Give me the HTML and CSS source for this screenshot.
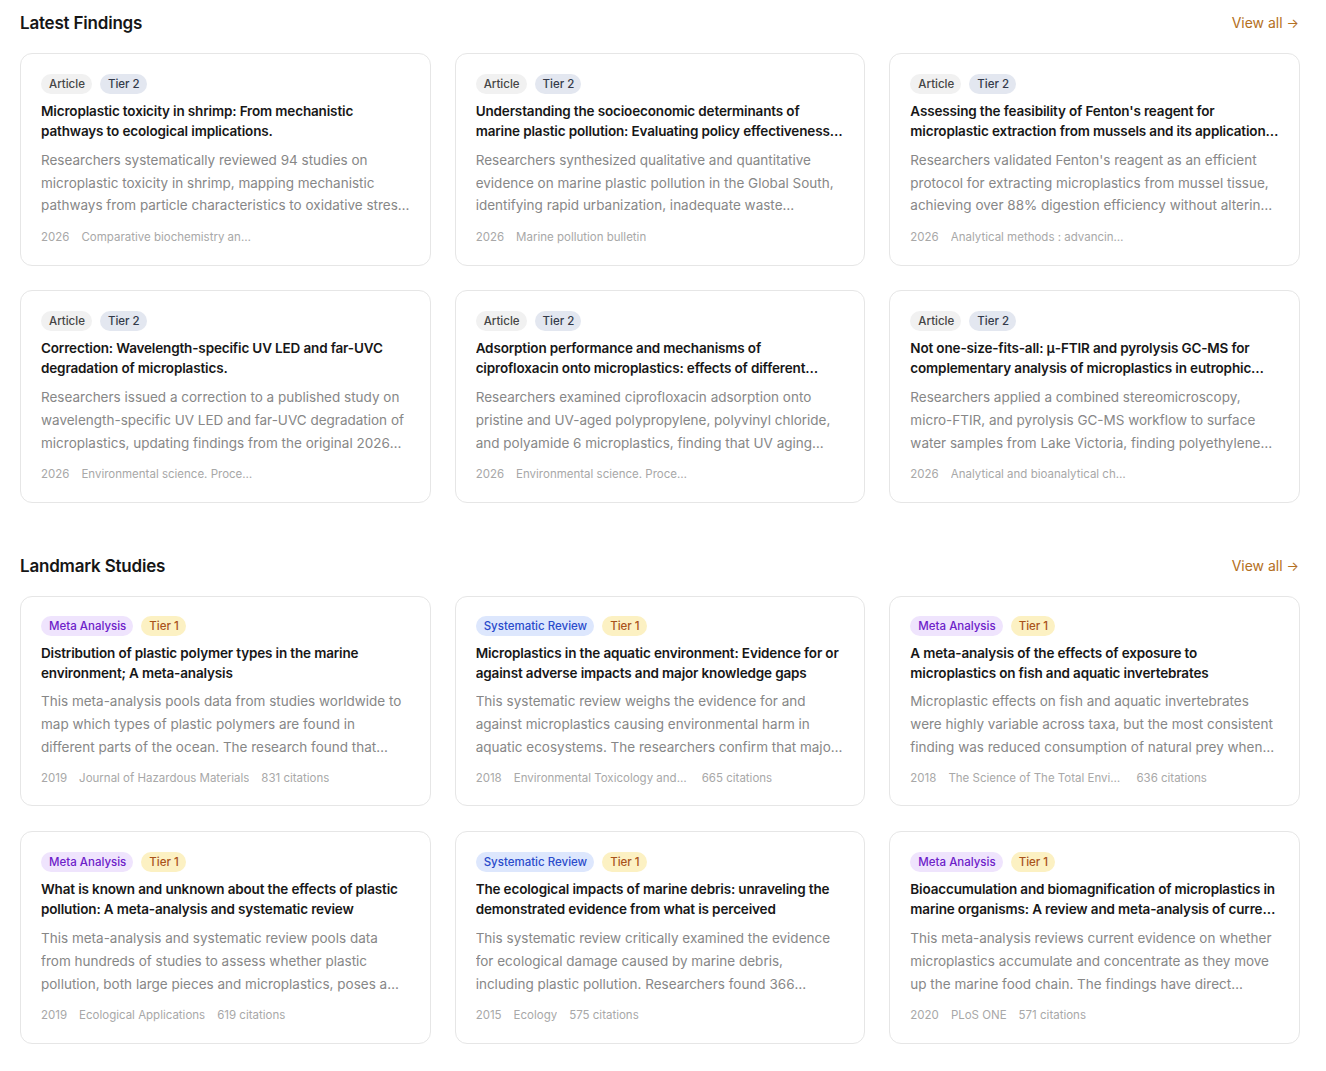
FILE: index.html
```html
<!DOCTYPE html>
<html lang="en">
<head>
<meta charset="utf-8">
<title>Findings</title>
<link rel="stylesheet" href="styles.css">
</head>
<body>
<main class="page">
  <section class="section">
    <div class="section-head">
      <h2 class="section-title">Latest Findings</h2>
      <a class="view-all" href="#">View all <span class="arrow">→</span></a>
    </div>
    <div class="grid">
      <article class="card">
        <div class="badges"><span class="badge badge-article">Article</span><span class="badge badge-tier2">Tier 2</span></div>
        <h3 class="card-title">Microplastic toxicity in shrimp: From mechanistic pathways to ecological implications.</h3>
        <p class="card-desc">Researchers systematically reviewed 94 studies on microplastic toxicity in shrimp, mapping mechanistic pathways from particle characteristics to oxidative stress and ecological implications.</p>
        <div class="meta"><span>2026</span><span class="journal">Comparative biochemistry and physiology</span></div>
      </article>
      <article class="card">
        <div class="badges"><span class="badge badge-article">Article</span><span class="badge badge-tier2">Tier 2</span></div>
        <h3 class="card-title">Understanding the socioeconomic determinants of marine plastic pollution: Evaluating policy effectiveness in the Global South</h3>
        <p class="card-desc">Researchers synthesized qualitative and quantitative evidence on marine plastic pollution in the Global South, identifying rapid urbanization, inadequate waste management and weak enforcement.</p>
        <div class="meta"><span>2026</span><span class="journal">Marine pollution bulletin</span></div>
      </article>
      <article class="card">
        <div class="badges"><span class="badge badge-article">Article</span><span class="badge badge-tier2">Tier 2</span></div>
        <h3 class="card-title">Assessing the feasibility of Fenton's reagent for microplastic extraction from mussels and its application in monitoring</h3>
        <p class="card-desc">Researchers validated Fenton's reagent as an efficient protocol for extracting microplastics from mussel tissue, achieving over 88% digestion efficiency without altering polymer properties.</p>
        <div class="meta"><span>2026</span><span class="journal">Analytical methods : advancing methods and applications</span></div>
      </article>
      <article class="card">
        <div class="badges"><span class="badge badge-article">Article</span><span class="badge badge-tier2">Tier 2</span></div>
        <h3 class="card-title">Correction: Wavelength-specific UV LED and far-UVC degradation of microplastics.</h3>
        <p class="card-desc">Researchers issued a correction to a published study on wavelength-specific UV LED and far-UVC degradation of microplastics, updating findings from the original 2026 publication.</p>
        <div class="meta"><span>2026</span><span class="journal">Environmental science. Processes &amp; impacts</span></div>
      </article>
      <article class="card">
        <div class="badges"><span class="badge badge-article">Article</span><span class="badge badge-tier2">Tier 2</span></div>
        <h3 class="card-title">Adsorption performance and mechanisms of ciprofloxacin onto microplastics: effects of different polymer types and UV aging</h3>
        <p class="card-desc">Researchers examined ciprofloxacin adsorption onto pristine and UV-aged polypropylene, polyvinyl chloride, and polyamide 6 microplastics, finding that UV aging increased adsorption capacity.</p>
        <div class="meta"><span>2026</span><span class="journal">Environmental science. Processes &amp; impacts</span></div>
      </article>
      <article class="card">
        <div class="badges"><span class="badge badge-article">Article</span><span class="badge badge-tier2">Tier 2</span></div>
        <h3 class="card-title">Not one-size-fits-all: μ-FTIR and pyrolysis GC-MS for complementary analysis of microplastics in eutrophic lakes</h3>
        <p class="card-desc">Researchers applied a combined stereomicroscopy, micro-FTIR, and pyrolysis GC-MS workflow to surface water samples from Lake Victoria, finding polyethylene and polypropylene dominated.</p>
        <div class="meta"><span>2026</span><span class="journal">Analytical and bioanalytical chemistry</span></div>
      </article>
    </div>
  </section>

  <section class="section">
    <div class="section-head">
      <h2 class="section-title">Landmark Studies</h2>
      <a class="view-all" href="#">View all <span class="arrow">→</span></a>
    </div>
    <div class="grid grid-landmark">
      <article class="card">
        <div class="badges"><span class="badge badge-meta">Meta Analysis</span><span class="badge badge-tier1">Tier 1</span></div>
        <h3 class="card-title">Distribution of plastic polymer types in the marine environment; A meta-analysis</h3>
        <p class="card-desc">This meta-analysis pools data from studies worldwide to map which types of plastic polymers are found in different parts of the ocean. The research found that polymer density shapes distribution.</p>
        <div class="meta"><span>2019</span><span class="journal">Journal of Hazardous Materials</span><span>831 citations</span></div>
      </article>
      <article class="card">
        <div class="badges"><span class="badge badge-sr">Systematic Review</span><span class="badge badge-tier1">Tier 1</span></div>
        <h3 class="card-title">Microplastics in the aquatic environment: Evidence for or against adverse impacts and major knowledge gaps</h3>
        <p class="card-desc">This systematic review weighs the evidence for and against microplastics causing environmental harm in aquatic ecosystems. The researchers confirm that major knowledge gaps remain.</p>
        <div class="meta"><span>2018</span><span class="journal">Environmental Toxicology and Chemistry</span><span>665 citations</span></div>
      </article>
      <article class="card">
        <div class="badges"><span class="badge badge-meta">Meta Analysis</span><span class="badge badge-tier1">Tier 1</span></div>
        <h3 class="card-title">A meta-analysis of the effects of exposure to microplastics on fish and aquatic invertebrates</h3>
        <p class="card-desc">Microplastic effects on fish and aquatic invertebrates were highly variable across taxa, but the most consistent finding was reduced consumption of natural prey when microplastics were present.</p>
        <div class="meta"><span>2018</span><span class="journal">The Science of The Total Environment</span><span>636 citations</span></div>
      </article>
      <article class="card">
        <div class="badges"><span class="badge badge-meta">Meta Analysis</span><span class="badge badge-tier1">Tier 1</span></div>
        <h3 class="card-title">What is known and unknown about the effects of plastic pollution: A meta-analysis and systematic review</h3>
        <p class="card-desc">This meta-analysis and systematic review pools data from hundreds of studies to assess whether plastic pollution, both large pieces and microplastics, poses a threat to organisms and ecosystems.</p>
        <div class="meta"><span>2019</span><span class="journal">Ecological Applications</span><span>619 citations</span></div>
      </article>
      <article class="card">
        <div class="badges"><span class="badge badge-sr">Systematic Review</span><span class="badge badge-tier1">Tier 1</span></div>
        <h3 class="card-title">The ecological impacts of marine debris: unraveling the demonstrated evidence from what is perceived</h3>
        <p class="card-desc">This systematic review critically examined the evidence for ecological damage caused by marine debris, including plastic pollution. Researchers found 366 perceived threats in the literature.</p>
        <div class="meta"><span>2015</span><span class="journal">Ecology</span><span>575 citations</span></div>
      </article>
      <article class="card">
        <div class="badges"><span class="badge badge-meta">Meta Analysis</span><span class="badge badge-tier1">Tier 1</span></div>
        <h3 class="card-title">Bioaccumulation and biomagnification of microplastics in marine organisms: A review and meta-analysis of current data</h3>
        <p class="card-desc">This meta-analysis reviews current evidence on whether microplastics accumulate and concentrate as they move up the marine food chain. The findings have direct implications for seafood safety.</p>
        <div class="meta"><span>2020</span><span class="journal">PLoS ONE</span><span>571 citations</span></div>
      </article>
    </div>
  </section>
</main>
</body>
</html>
```

FILE: styles.css
```css
* { box-sizing: border-box; }

html, body {
  margin: 0;
  padding: 0;
  background: #ffffff;
}

body {
  font-family: Inter, "Noto Sans", "Liberation Sans", sans-serif;
  color: #1a1a1a;
  -webkit-font-smoothing: antialiased;
}

.page {
  width: 1280px;
  margin-left: 20px;
  padding-top: 11px;
  padding-bottom: 24px;
  display: flex;
  flex-direction: column;
  gap: 51px;
}

.section-head {
  display: flex;
  align-items: center;
  justify-content: space-between;
  height: 22px;
  margin-bottom: 20px;
}

.section-title {
  margin: 0;
  padding-top: 2px;
  font-size: 17px;
  font-weight: 600;
  letter-spacing: -0.2px;
  line-height: 22px;
  color: #161616;
}

.view-all {
  font-size: 14px;
  color: #b46f22;
  text-decoration: none;
  line-height: 22px;
  margin-right: 1px;
  padding-top: 2px;
}

.arrow { font-size: 13px; }

.grid {
  display: grid;
  grid-template-columns: repeat(3, 1fr);
  gap: 24px;
}

.grid-landmark { row-gap: 25px; }

.card {
  border: 1px solid #e6e6e6;
  border-radius: 12px;
  padding: 20px 20px 20px;
  background: #fff;
  display: flex;
  flex-direction: column;
  min-width: 0;
}

.grid-landmark .card:nth-child(-n+3) {
  padding-top: 19px;
  padding-bottom: 19px;
}

.grid-landmark .card:nth-child(-n+3) .card-desc {
  margin-top: 7px;
}

.badges {
  display: flex;
  gap: 8px;
  margin-bottom: 7px;
}

.badge {
  display: inline-flex;
  align-items: center;
  height: 20px;
  padding: 0 7px 0 8px;
  border-radius: 10px;
  font-size: 11.5px;
  font-weight: 500;
  line-height: 20px;
  white-space: nowrap;
}

.badge-article { background: #f1f1f1; color: #454545; }
.badge-tier2 { background: #e3e7f0; color: #333a4a; }
.badge-meta { background: #efe4fd; color: #6d21c9; }
.badge-sr { background: #dde7fd; color: #2a4bcb; }
.badge-tier1 { background: #fcf1c3; color: #a9531b; }

.card-title {
  margin: 1px 0 0;
  font-size: 13.5px;
  font-weight: 600;
  line-height: 19.5px;
  color: #171717;
  letter-spacing: -0.15px;
  display: -webkit-box;
  -webkit-line-clamp: 2;
  -webkit-box-orient: vertical;
  overflow: hidden;
}

.card-desc {
  margin: 8px 0 0;
  font-size: 13.5px;
  line-height: 22.7px;
  color: #878787;
  display: -webkit-box;
  -webkit-line-clamp: 3;
  -webkit-box-orient: vertical;
  overflow: hidden;
}

.meta {
  margin-top: 12px;
  display: flex;
  gap: 12px;
  font-size: 11.5px;
  line-height: 16px;
  color: #a8a8a8;
  white-space: nowrap;
}

.journal {
  max-width: 176px;
  overflow: hidden;
  text-overflow: ellipsis;
}
```
